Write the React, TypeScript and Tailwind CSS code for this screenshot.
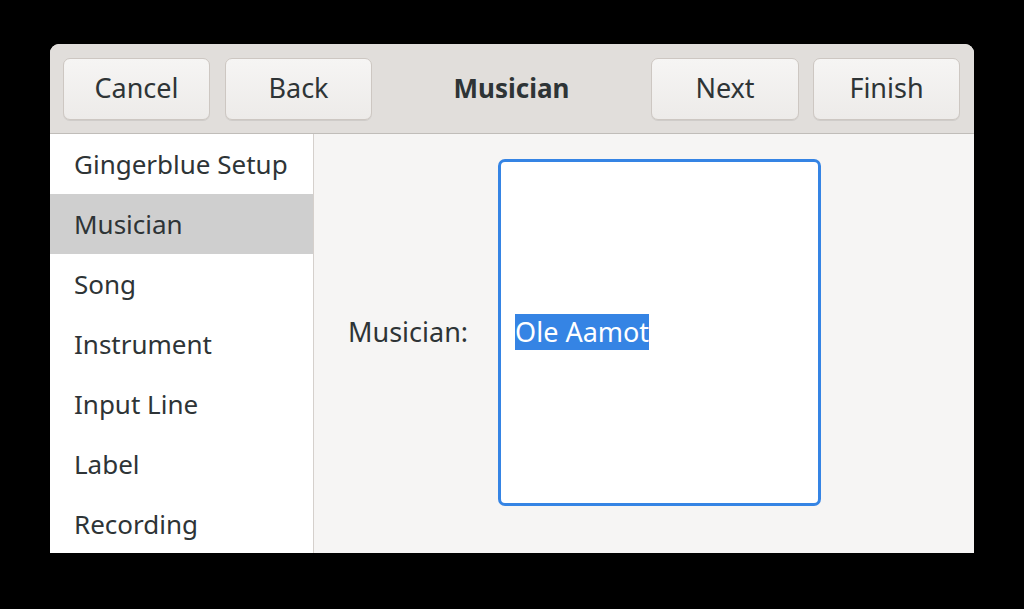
const steps = [
  "Gingerblue Setup",
  "Musician",
  "Song",
  "Instrument",
  "Input Line",
  "Label",
  "Recording",
];

function HeaderButton({ label, className = "" }: { label: string; className?: string }) {
  return (
    <button
      className={`flex h-[62px] items-center justify-center rounded-[7px] border border-[#cdc7c2] bg-gradient-to-b from-[#f6f5f4] to-[#edebe9] text-[27px] text-[#2e3436] shadow-[0_1px_0_rgba(0,0,0,0.08)] ${className}`}
    >
      {label}
    </button>
  );
}

export default function App() {
  return (
    <div
      className="h-[609px] w-[1024px] bg-black pl-[50px] pt-[44px]"
      style={{ fontFamily: '"Noto Sans", "Open Sans", sans-serif' }}
    >
      <div className="flex h-[509px] w-[924px] flex-col overflow-hidden rounded-t-[9px] bg-[#f6f5f4]">
        {/* Header bar */}
        <div className="flex h-[90px] shrink-0 items-center border-b border-[#c0bdb9] bg-[#e1dedb] pl-[13px] pr-[14px]">
          <HeaderButton label="Cancel" className="w-[147px]" />
          <HeaderButton label="Back" className="ml-[15px] w-[147px]" />
          <div className="flex-1 text-center text-[26px] font-bold text-[#2e3436]">Musician</div>
          <HeaderButton label="Next" className="w-[148px]" />
          <HeaderButton label="Finish" className="ml-[14px] w-[147px]" />
        </div>

        <div className="flex flex-1">
          {/* Sidebar */}
          <div className="w-[264px] shrink-0 border-r border-[#d5d0cc] bg-white">
            {steps.map((s, i) => (
              <div
                key={s}
                className={`flex h-[60px] items-center pl-[24px] text-[26px] text-[#2e3436] ${i === 1 ? "bg-[#cfcfcf]" : ""}`}
              >
                {s}
              </div>
            ))}
          </div>

          {/* Page */}
          <div className="flex flex-1 items-center pb-[24px] pl-[34px]">
            <span className="text-[27px] text-[#2e3436]">Musician:</span>
            <div className="ml-[30px] flex h-[347px] w-[323px] items-center rounded-[7px] border-[3px] border-[#3584e4] bg-white pl-[14px]">
              <span className="bg-[#3584e4] text-[27px] leading-[36px] text-white">Ole Aamot</span>
            </div>
          </div>
        </div>
      </div>
    </div>
  );
}
